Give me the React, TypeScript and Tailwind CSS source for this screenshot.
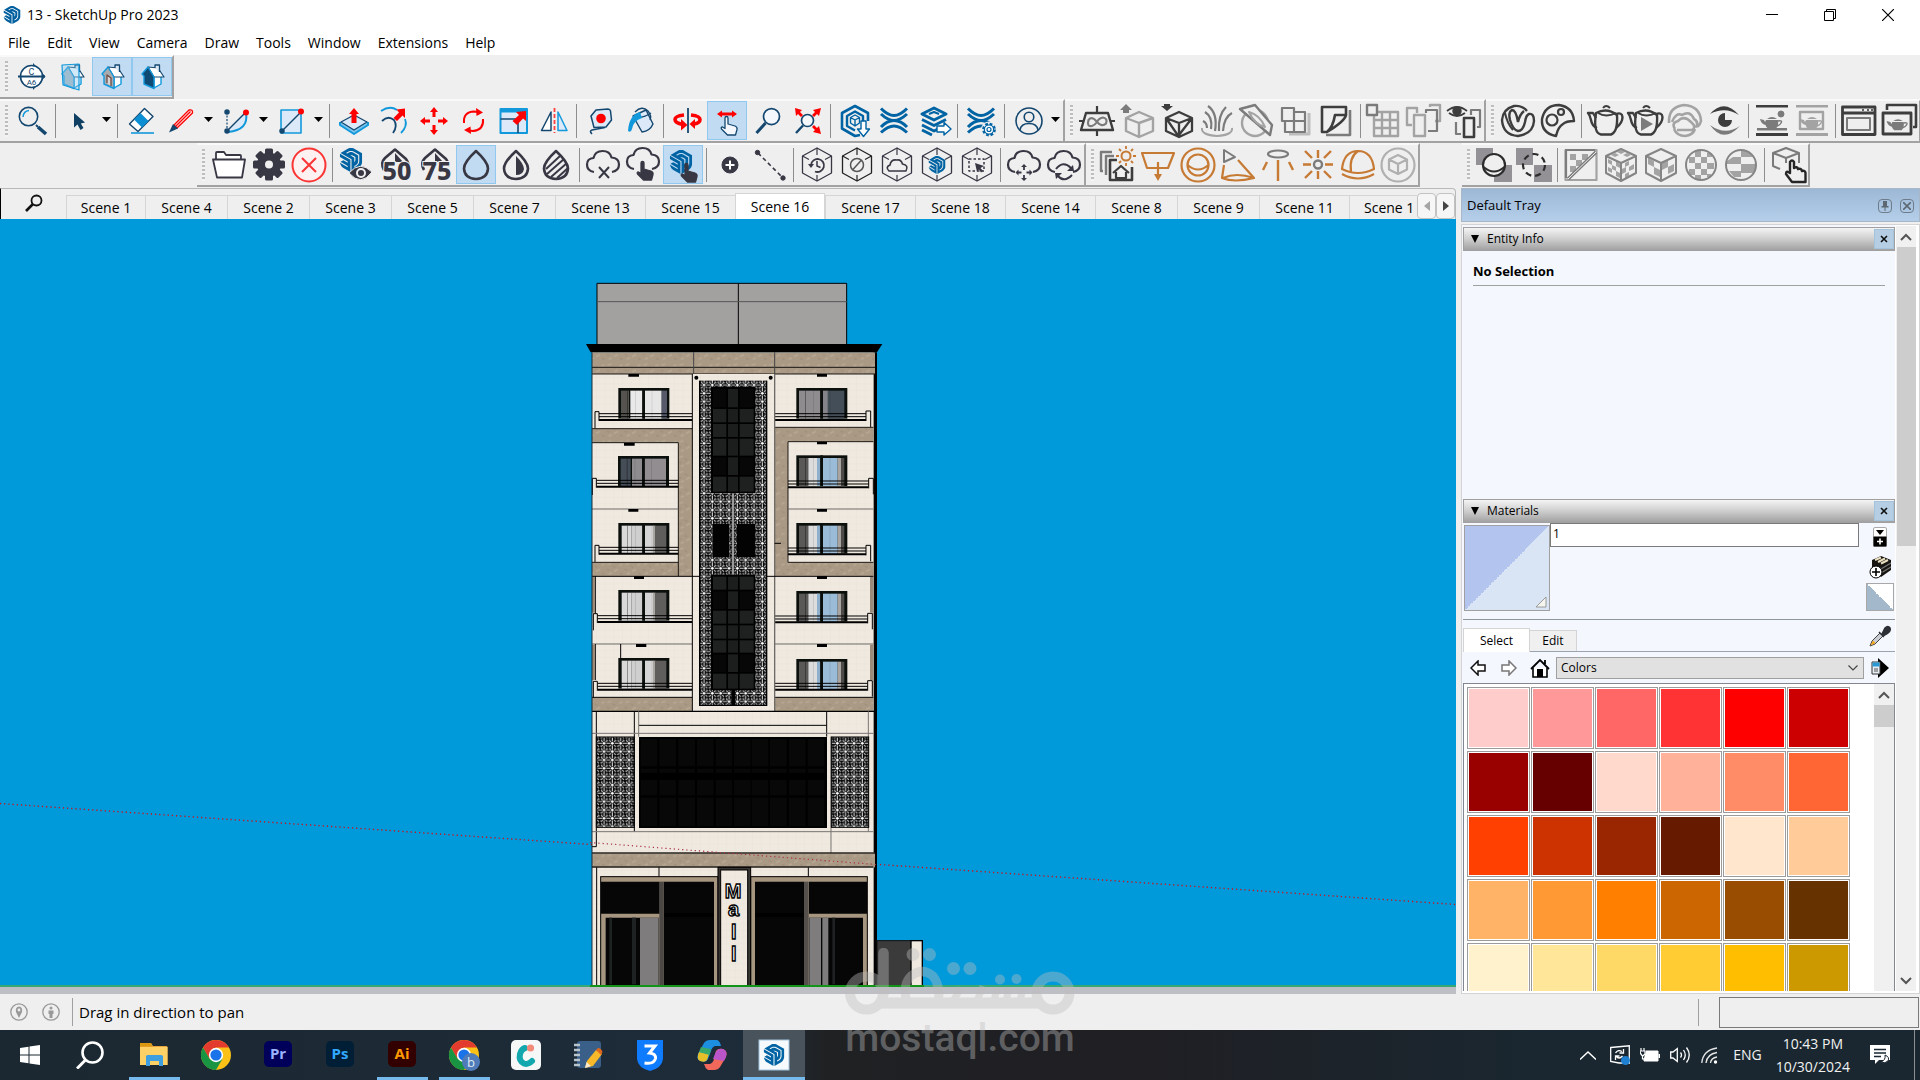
import React, { ReactNode } from "react";
import { SiSketchup } from "react-icons/si";

const NAVY = "#14476f";
const CYAN = "#1299dc";
const RED = "#ff0000";
const BLUE = "#0063a3";
const INK = "#383744";
const DARK = "#3d3d3d";
const MID = "#7b7b7b";
const PALE = "#a3a3a3";
const ORANGE = "#c67a34";

type LineProps = { d: string; c?: string; w?: number; f?: string; dash?: string; o?: number };
const L = ({ d, c = NAVY, w = 1.5, f = "none", dash, o }: LineProps) => (
  <path d={d} stroke={c} strokeWidth={w} fill={f} strokeDasharray={dash} opacity={o} strokeLinejoin="round" />
);
const F = ({ d, c = NAVY, o }: { d: string; c?: string; o?: number }) => <path d={d} fill={c} opacity={o} />;
const O = ({ x, y, r, c = NAVY, w = 1.5, f = "none", dash }: { x: number; y: number; r: number; c?: string; w?: number; f?: string; dash?: string }) => (
  <circle cx={x} cy={y} r={r} stroke={c} strokeWidth={w} fill={f} strokeDasharray={dash} />
);

const House = ({ front }: { front: string }) => (
  <g>
    <F d="M22 20 L29 19 V27 L22 31Z" c="#fff" />
    <L d="M22 19 V31 L29 27 V19" c={CYAN} w={1.4} />
    <L d="M16 10 L26 11 L32 20 L22 20Z" w={1.2} f="#fff" />
    <L d="M23 11 V8 H27.500 V15" w={1.3} f="#dbe8f5" />
    <L d="M12 19 V27 L22 31.500 V20 L16 10 L10 17Z" c={CYAN} w={1.4} f={front} />
  </g>
);

const HexFrame = ({ children, c = INK }: { children?: ReactNode; c?: string }) => (
  <g>
    <L d="M20 3 L34.500 11 V28 L20 36 L5.500 28 V11Z" c={c} w={1.3} />
    <L d="M20 3 V10 M20 30 V36 M5.500 11 L12 14.500 M34.500 11 L28 14.500" c={c} w={1.2} />
    {children}
  </g>
);

const Hand = ({ c, f }: { c: string; f: string }) => (
  <L
    d="M18 17 Q18 15.500 19.500 15.500 Q21 15.500 21 17 V23 L28 25 Q30.500 26 30 28.500 L28.500 34 H20.500 L14.500 28 Q13.500 26 15.500 26 L18 27.500Z"
    c={c}
    f={f}
    w={1.3}
  />
);

const Cloud = ({ d = 0 }: { d?: number }) => (
  <g transform={d ? `translate(0 ${d})` : undefined}>
    <L d="M11 27 Q4 26 4 19.500 Q4 13.500 10.500 13 Q12 6 19.500 6 Q27 6 28.500 12.500 Q36 13 36 19.500 Q36 25.500 29 27" c={INK} w={2.2} />
  </g>
);

const Drop = ({ children }: { children?: ReactNode }) => (
  <g>
    <L d="M20 6 Q32 17 32 23.500 Q31.500 33.500 20 34 Q8.500 33.500 8 23.500 Q8 17 20 6Z" c={INK} w={2.6} />
    {children}
  </g>
);

const Percent = ({ n }: { n: string }) => (
  <g>
    <L d="M8 25 Q4 18 9 13 L19 4.500 L30 14 Q33 18 32 21" c={INK} w={2.6} />
    <F d="M19 8 L27 17 H19Z" c={INK} />
    <text x="21" y="35" textAnchor="middle" fontSize="25" fontWeight="800" fontFamily="Noto Sans" fill={INK} stroke="#efefef" strokeWidth="2" paintOrder="stroke">
      {n}
    </text>
  </g>
);

const Teapot = ({ c = DARK, w = 2.4 }: { c?: string; w?: number }) => (
  <g>
    <L d="M11 12 Q8 32 16 33.500 H26 Q33 31 32 14 Q22 6 11 12Z" c={c} w={w} />
    <L d="M11 17 L8 12 H3 Q5 14 6 19 Q7 25 12 27" c={c} w={w} />
    <L d="M31 13 Q37 11 37.500 16 Q37.500 22 31 27" c={c} w={w} />
    <L d="M13 12 Q21 17 31 12 M18 7 Q21 3 25 7" c={c} w={w * 0.8} />
  </g>
);

const MiniTeapot = ({ c = MID }: { c?: string }) => (
  <g>
    <F d="M14 19 H26 Q27 24 24 27.500 H16 Q14 26 13.500 24 Q9 23 8 18 L12 19 L13 21Z" c={c} />
    <L d="M26 20 Q31 19 29 22 Q28 24 25 25" c={c} w={1.4} />
    <F d="M15 18 Q20 14 25 18Z" c={c} />
  </g>
);

const Waves = () => (
  <g fill="none" stroke={BLUE} strokeWidth={3}>
    <path d="M7 7.500 Q14 14.500 20 14.500 Q26 14.500 33 7.500" />
    <path d="M7 13 Q14 19.500 20 19.500 Q26 19.500 33 13" />
    <path d="M7 26 Q13 19.500 20 19.500 Q27 19.500 33 26" />
    <path d="M7 31.500 Q14 25 20 25 Q26 25 33 31.500" />
  </g>
);

const CubeChecks = ({ fine = false }: { fine?: boolean }) => (
  <g>
    <F
      d={
        fine
          ? "M7 14 L11 16 V20 L7 18Z M11 20 L15 22 V26 L11 24Z M15 16 L19 19 V23 L15 21Z M7 22 L11 24 V28 L7 26Z M15 26 L19 28 V33 L15 31Z M24 18 L28 16 V20 L24 22Z M28 22 L33 19 V24 L28 26Z M21 24 L25 22 V27 L21 29Z M24 29 L28 27 V31 L24 33Z M16 7 L20 5 L24 7 L20 9Z M10 10 L14 8 L18 10 L14 12Z M22 10 L26 8 L30 10 L26 12Z"
          : "M7 13 L13 16 V22 L7 19Z M13 22 L19 25 V32 L13 29Z M21 18 L27 15 V22 L21 25Z M27 22 L33 19 V26 L27 29Z"
      }
      c={PALE}
    />
    <L d="M20 4 L35 11 V28 L20 36 L5 28 V11Z M5 11 L20 18 L35 11 M20 18 V36" c="#858585" w={2} />
  </g>
);

const icons: Record<string, ReactNode> = {
  section: (
    <g>
      <F d="M21 6 L33.500 19.500 L21 33Z" />
      <O x={19.5} y={19.5} r={11} f="#fff" w={1.6} />
      <L d="M6 19.500 H33" w={2} />
      <text x="19.500" y="17.500" fontSize="9" textAnchor="middle" fontFamily="Roboto" fill={NAVY}>C</text>
      <text x="19.500" y="28" fontSize="8" textAnchor="middle" fontFamily="Roboto" fill={NAVY}>A6</text>
    </g>
  ),
  sectionDisplay: (
    <g>
      <House front="#a9b4bc" />
      <L d="M10 8 L27 7 V33 L11 28Z" c={CYAN} w={1.2} f="#8ecbee66" />
    </g>
  ),
  sectionCut: (
    <g>
      <House front="#a7abb0" />
      <L d="M15 26 V18 L19 21 V29" c="#6d4b45" w={1.3} f="#d7d7d7" />
    </g>
  ),
  sectionFill: <House front="#0f4a74" />,
  search: (
    <g>
      <O x={16.5} y={15.6} r={9.2} w={1.6} />
      <L d="M11 16 Q11.500 10 17 9.500" c={CYAN} w={1.5} />
      <L d="M24 24 L26 26" w={2} />
      <L d="M26 26 L34 33" w={3.6} />
    </g>
  ),
  select: <F d="M15 12 V26.500 L18.500 23.500 L21.500 29 L24.500 27 L21.800 22.500 L26 21.500Z" c="#0f3f63" />,
  eraser: (
    <g>
      <L d="M8.500 23 L23.500 7.500 L32 15.500 L17 30.500Z" f="#fff" w={1.4} />
      <F d="M13 18.500 L19.500 12 L27.500 20 L21 26.500Z" c="#0b8fd2" />
      <L d="M10 32 H33" c={CYAN} w={1.6} />
    </g>
  ),
  pencil: (
    <g>
      <L d="M13 24 L28 9 Q32 8 31.500 12 L16 27Z" c={RED} w={1.3} f="#fbe9ea" />
      <L d="M14.500 25.500 L29.500 10.500" c={RED} w={1.2} />
      <F d="M8 31.500 L12 23 L17 27.500Z" />
    </g>
  ),
  arc: (
    <g>
      <F d="M11 30 L30 11 Q32 28 11 30Z" c="#dce9f8" />
      <L d="M11 30 L30 11" w={1.4} />
      <L d="M11 11 V30" w={1.2} dash="2 1.500" />
      <L d="M30 12 Q33 29 12 31" c={CYAN} w={2} />
      <O x={11} y={11} r={2} f={NAVY} />
      <O x={11} y={30} r={2} f={NAVY} />
      <O x={30} y={11.5} r={3} c={RED} f={RED} w={0} />
    </g>
  ),
  rect: (
    <g>
      <L d="M10 9 H30 V32 H10Z" c={CYAN} w={1.6} f="#dce9f8" />
      <L d="M11 30 L30 11" w={1.4} />
      <O x={11} y={30} r={2} f={NAVY} />
      <O x={30} y={10.5} r={3} c={RED} f={RED} w={0} />
    </g>
  ),
  pushPull: (
    <g>
      <L d="M7 21 V24 L21 33 L35 24 V21" c={CYAN} w={2} f="#7cc6ee" />
      <L d="M21 14 L34 21 L21 29 L8 21Z" w={1.3} f="#dce9f8" />
      <F d="M21 7 L26 13 H23.500 V22 H18.500 V13 H16Z" c={RED} />
    </g>
  ),
  offset: (
    <g>
      <L d="M8 10 Q17 4 24 9" c={CYAN} w={1.8} />
      <L d="M32 18 Q35 25 28 32" c={CYAN} w={1.8} />
      <L d="M9 20 Q15 14 21 19 Q25 25 20 32" w={1.8} />
      <F d="M32 7.500 V17 L29.500 14.500 L24 20 L20.500 17 L26 11.500 L23.500 8.500Z" c={RED} />
    </g>
  ),
  move: (
    <F
      d="M21 6 L25 11 H22.500 V16 H19.500 V11 H17Z M21 34 L25 29 H22.500 V24 H19.500 V29 H17Z M7 20 L12 16 V18.500 H17 V21.500 H12 V24Z M35 20 L30 16 V18.500 H25 V21.500 H30 V24Z"
      c={RED}
    />
  ),
  rotate: (
    <g>
      <L d="M11 22 Q10 11 21 10.500 L25 11" c={RED} w={2} />
      <L d="M30 18 Q31 29 20 30 L16 29.500" c={RED} w={2} />
      <F d="M23 7 L30 11.500 L23.500 15Z" c={RED} />
      <F d="M18 33 L11 29 L17.500 25.500Z" c={RED} />
    </g>
  ),
  scale: (
    <g>
      <L d="M7.500 8 H34 V32 H7.500Z" c={CYAN} w={2} f="#dce9f8" />
      <F d="M7 8 H35 V11.500 H7Z" c={CYAN} />
      <L d="M7.500 18 H25 V32" w={1.6} />
      <F d="M33 10 V20 L30 17.500 L24 24 L19.500 20 L26 14 L23 11Z" c={RED} />
    </g>
  ),
  flip: (
    <g>
      <L d="M18 11 V29.500 H8.500Z" w={1.5} f="#fff" />
      <L d="M25 11 V29.500 H34Z" c={CYAN} w={1.5} f="#dce9f8" />
      <L d="M21.500 7 V32" c="#ff4040" w={1.8} dash="4 2" />
    </g>
  ),
  tape: (
    <g>
      <L d="M16 9 L28 8 Q30 8 30.500 10 L31.500 19 L26 26 L14 26.500 L11 15Z" w={1.5} f="#dce9f8" />
      <L d="M25 26.500 L12 29 Q9 30 12 33" w={1.6} />
      <O x={21} y={17.5} r={4.8} c={RED} f={RED} w={0} />
    </g>
  ),
  paint: (
    <g>
      <L d="M13 15 L26 9 L33 23 Q30 30 22 31Z" w={1.4} f="#dce9f8" />
      <L d="M15 11 Q22 4 28 10 Q32 15 30 19 M13 15 Q20 19 31 12" w={1.3} />
      <F d="M20 11 Q9 14 8 30 Q11 32 12 28 Q13 20 22 17Z" c={CYAN} />
    </g>
  ),
  orbit: (
    <g>
      <path d="M17 14 Q8 15 8 18.500 Q8 22 16 23.500" fill="none" stroke={RED} strokeWidth="3.600" />
      <path d="M24 14 Q33 15 33 18.500 Q33 22 27 23" fill="none" stroke={RED} strokeWidth="3.600" />
      <F d="M14 18 L20.500 24 L14 29.500Z" c={RED} />
      <F d="M28 18 L22.500 23 L28 28Z" c={RED} />
      <L d="M21 7 V32" w={1.8} />
    </g>
  ),
  pan: (
    <g>
      <Hand c={NAVY} f="#f4f8fd" />
      <F d="M10 13 L15 9.500 V11.500 H25 V9.500 L30 13 L25 16.500 V14.500 H15 V16.500Z" c={RED} />
    </g>
  ),
  zoom: (
    <g>
      <O x={24.5} y={15.6} r={8} w={1.7} f="#f4f8fd" />
      <L d="M18.500 22 L9.500 32" w={3} />
    </g>
  ),
  extents: (
    <g>
      <O x={20.5} y={19.5} r={6} w={1.7} f="#f4f8fd" />
      <L d="M16 24.500 L9 32" w={2.4} />
      <F d="M8 7 L15 9 L13 11 L16 14 L14 16 L11 13 L9 15Z M34 7 L32 15 L30 13 L27 16 L25 14 L28 11 L26 9Z M34 33 L26 31 L28 29 L25 26 L27 24 L30 27 L32 25Z" c={RED} />
    </g>
  ),
  warehouse: (
    <g>
      <L d="M26 34 L21 35 L8 27.500 V12 L21 5 L34 12 V20" c={BLUE} w={2.6} />
      <L d="M21 29.500 L13 25 V15 L21 10.500 L29 15 V20" c={BLUE} w={2.4} />
      <L d="M21 14 L25.500 16.500 V22 L21 25 L16.500 22 V16.500Z M16.500 16.500 L21 19 L25.500 16.500 M21 19 V25" c={BLUE} w={1.4} />
      <L d="M27 20 H32 V28 H35.500 L29.500 35.500 L23.500 28 H27Z" c={BLUE} w={1.4} f="#fff" />
    </g>
  ),
  extension: <Waves />,
  layout: (
    <g>
      <L d="M8 13 L20 7 L32 13 L20 19Z" c={BLUE} w={3} />
      <L d="M15 13 L20 11 L25 13" c={BLUE} w={2} />
      <L d="M8 18.500 L20 24.500 L32 18.500 M8 24 L20 30 L26 27 M8 29 L18 34" c={BLUE} w={2.8} />
      <L d="M23 25 H30 V21.500 L37 28 L30 34 V31 H23Z" c={BLUE} w={1.4} f="#fff" />
    </g>
  ),
  extManager: (
    <g>
      <Waves />
      <O x={28} y={28.5} r={7.5} c="#efefef" w={1} f="#efefef" />
      <O x={28} y={28.5} r={5.6} c={BLUE} w={2.6} f="#fff" dash="2.600 1.800" />
      <O x={28} y={28.5} r={4.6} c={BLUE} w={1.2} f="#fff" />
      <O x={28} y={28.5} r={2} c={BLUE} w={1.2} />
    </g>
  ),
  account: (
    <g>
      <O x={21} y={20} r={13} w={1.6} />
      <O x={21} y={16} r={4.8} w={1.6} />
      <L d="M12 29 Q13 22.500 21 22.500 Q29 22.500 30 29" w={1.6} />
    </g>
  ),
  infinitePlane: (
    <g>
      <L d="M9 12 H31 L36 29 H4Z" c={DARK} w={2.4} />
      <path d="M20 21 Q15 14.500 11.500 19 Q9.500 26 15 25 Q18 24 20 21 Q22 17 26 16.500 Q31 17.500 29 22.500 Q25 26.500 20 21Z" fill="none" stroke={MID} strokeWidth="2.200" />
      <L d="M20 5 V12 M20 29 V35 M2 20 H7 M33 20 H38" c={DARK} w={2.2} />
    </g>
  ),
  proxyExport: (
    <g>
      <L d="M22 11 L36 17 V30 L22 36 L9 30 V17Z M9 17 L22 22 L36 17 M22 22 V36" c={PALE} w={2.4} />
      <F d="M9 3 L15 9 H12 V12 H6 V9 H3Z" c={MID} />
    </g>
  ),
  proxyImport: (
    <g>
      <L d="M22 11 L35 17 V30 L22 36 L9 30 V17Z M9 17 L22 22 L35 17 M22 22 V36 M9 17 L22 36 M35 17 L22 34" c={DARK} w={2.3} />
      <F d="M10 10 L4 5 H7 V3 H13 V5 H16Z" c={DARK} />
    </g>
  ),
  fur: (
    <g>
      <L d="M5 27 Q4 34 20 35 Q36 34 35 27" c={PALE} w={2} />
      <L d="M14 28 Q16 16 8 11 M18 30 Q21 12 11 5 M22 30 Q21 14 29 6 M26 30 Q27 16 35 12 M10 27 Q10 22 6 20" c={MID} w={2.2} />
    </g>
  ),
  clipper: (
    <g>
      <O x={18} y={22} r={13} c={PALE} w={2.4} />
      <L d="M3 8 L18 4 L35 24 L33 34Z" c={MID} w={2.4} f="#efefef" />
      <L d="M12 11 Q23 14 28 26 Q18 24 12 11Z" c={PALE} w={2} />
    </g>
  ),
  decal: (
    <g>
      <L d="M32 12 V33 H12" c="#bdbdbd" w={3} />
      <L d="M5 7 H17 V20 H5Z" c={MID} w={2.2} />
      <L d="M17 11 H28 V31 H8 V20 M8 20 H28 M17 20 V31" c={MID} w={2.2} />
    </g>
  ),
  displacement: (
    <g>
      <L d="M33 9 V34 H9" c={MID} w={2.6} />
      <L d="M5 6 H29 V14 Q28 20 10 31 H5Z M29 14 H18 Q16 26 10 31" c={DARK} w={2.6} />
    </g>
  ),
  scatter: (
    <g>
      <L d="M10 11 H34 V35 H10Z M10 19 H34 M10 27 H34 M18 11 V35 M26 11 V35" c={PALE} w={2.4} />
      <L d="M3 4 H13 V14 H3Z" c={MID} w={2.4} f="#efefef" />
    </g>
  ),
  copies: (
    <g>
      <L d="M8 24 H3 V7 H13 V12 M26 6 V4 H36 V20 H31" c={PALE} w={2.4} />
      <L d="M22 12 V9 H33 V30 H24" c={MID} w={2.2} />
      <L d="M10 14 H21 V35 H10Z" c={PALE} w={2.4} />
    </g>
  ),
  hideCopies: (
    <g>
      <L d="M3 10 Q13 2 23 10 M5 12 Q13 18 21 12" c={DARK} w={2} />
      <O x={13} y={10} r={4} c={DARK} f={DARK} />
      <L d="M12 21 V33 H17 M27 14 V9 H36 V26 H33" c={MID} w={2.2} />
      <L d="M20 17 H30 V36 H20Z" c={DARK} w={2.6} />
    </g>
  ),
  vray: (
    <g>
      <path d="M29 10 Q24 4 16 5 Q5 8 4 19 Q5 34 20 35 Q35 33 36 20 Q36 12 31 13 Q28 14 27 21 Q25 30 20 30 Q15 29 12 19 Q10 11 14 9 Q18 9 20 21 Q22 13 26 10" fill="none" stroke={DARK} strokeWidth="2.400" />
      <L d="M7 12 Q9 22 15 29" c={DARK} w={2} />
    </g>
  ),
  palette: (
    <g>
      <L d="M18 35 Q3 32 4 18 Q7 4 21 4 Q35 6 36 20 Q28 20 25 23 Q20 26 18 35Z" c={DARK} w={2.4} />
      <O x={14} y={19} r={5.5} c={DARK} w={2.2} />
      <O x={23} y={11} r={3} c={DARK} w={2.2} />
    </g>
  ),
  render: <Teapot />,
  renderPlay: (
    <g>
      <Teapot />
      <F d="M16 16 L28 23 L16 30Z" c={MID} />
    </g>
  ),
  cosmos: (
    <g>
      <L d="M4 22 Q3 6 19 4 Q35 5 36 20 Q34 27 30 25 M7 21 Q11 11 17 14 Q25 9 29 18 Q33 20 32 25" c={PALE} w={2.6} />
      <L d="M10 28 Q6 22 13 20 Q19 14 26 21 Q32 26 27 29 H12 M9 28 Q12 35 20 35 Q28 34 30 28" c={PALE} w={2.6} />
    </g>
  ),
  vision: (
    <g>
      <path d="M5 13 Q19 -3 34 14 Q20 5 5 13Z" fill={DARK} />
      <path d="M5 24 Q18 43 35 25 Q20 35 5 24Z" fill={MID} />
      <F d="M20 12 A7 7 0 1 0 27 19 H20Z" c={DARK} />
    </g>
  ),
  lightGen: (
    <g>
      <F d="M4 4 H36 V6.500 H4Z M4 32 H36 V35 H4Z" c={DARK} />
      <F d="M5 27 H35 V29.500 H5Z" c={MID} />
      <MiniTeapot />
      <O x={29} y={13} r={3} c={MID} f={MID} w={1} />
    </g>
  ),
  lightGenOff: (
    <g>
      <F d="M4 4 H36 V6.500 H4Z M4 32 H36 V35 H4Z" c={PALE} />
      <L d="M8 11 H31 V28 H8Z" c={PALE} w={2.4} />
      <MiniTeapot c={PALE} />
    </g>
  ),
  frameBuffer: (
    <g>
      <L d="M3.500 6 H36 V33.500 H3.500Z M3.500 12 H36" c={DARK} w={2.8} />
      <L d="M24 8 V10 M29 8 V10 M33 8 V10" c={DARK} w={1.6} />
      <L d="M8 17 H31 V29 H8Z" c={MID} w={2} />
    </g>
  ),
  batch: (
    <g>
      <L d="M8 9 V4 H37 V26 H34" c={DARK} w={2.6} />
      <L d="M4 12 H32 V33 H4Z" c={DARK} w={2.8} />
      <g transform="translate(0 3) scale(.95)"><MiniTeapot /></g>
    </g>
  ),
  folder: (
    <g>
      <L d="M7 14 V8 Q7 7 8 7 H15 L17 10 H31 Q32 10 32 11 V14" c={INK} w={1.8} f="#fff" />
      <L d="M4 14.500 H36 L33 32.500 H8Z" c={INK} w={1.8} f="#fff" />
    </g>
  ),
  gear: (
    <g>
      <g fill={INK}>
        {[0, 45, 90, 135].map((a) => (
          <rect key={a} x="16" y="3.500" width="8" height="32" rx="1.500" transform={`rotate(${a} 20 19.500)`} />
        ))}
        <circle cx="20" cy="19.500" r="12" />
      </g>
      <circle cx="20" cy="19.500" r="4" fill="#efefef" />
    </g>
  ),
  cancel: (
    <g>
      <O x={20} y={20} r={16.5} c="#fb3434" w={2} f="#fdf1f1" />
      <L d="M13 13 L27 27 M27 13 L13 27" c="#fb3434" w={2} />
    </g>
  ),
  suEye: (
    <g>
      <SiSketchup x="3" y="3" size={24} color={BLUE} />
      <path d="M13 28 Q24 15 36 27 Q25 42 13 28Z" fill={INK} stroke="#efefef" />
      <O x={25} y={28} r={4} c="#efefef" w={2} />
    </g>
  ),
  fifty: <Percent n="50" />,
  seventyFive: <Percent n="75" />,
  drop: <Drop />,
  halfDrop: (
    <Drop>
      <F d="M20 11 Q28 19 28 24 Q27 30 20 30Z" c={INK} />
    </Drop>
  ),
  hatchDrop: (
    <Drop>
      <L d="M10 24 L24 11 M11 29 L28 14 M15 32 L31 18 M21 33 L32 23" c={INK} w={2} />
    </Drop>
  ),
  cloudX: (
    <g>
      <Cloud />
      <L d="M16 22 L26 33 M26 22 L16 33" c={INK} w={2} />
    </g>
  ),
  cloudHand: (
    <g>
      <Cloud d={-3} />
      <g transform="translate(0 1)"><Hand c={INK} f={INK} /></g>
    </g>
  ),
  suHand: (
    <g>
      <SiSketchup x="6" y="5" size={24} color={BLUE} />
      <g transform="translate(4 3)"><Hand c={INK} f={INK} /></g>
    </g>
  ),
  plus: (
    <g>
      <O x={20} y={20} r={8} c={INK} f={INK} w={1} />
      <L d="M20 15.500 V24.500 M15.500 20 H24.500" c="#fff" w={2} />
    </g>
  ),
  dashLine: (
    <g>
      <L d="M8 8 L33 33" c={INK} w={1.6} dash="4 3" />
      <O x={7.5} y={7.5} r={2.2} c={INK} f={INK} w={1} />
      <O x={33} y={33} r={2.2} c={INK} f={INK} w={1} />
    </g>
  ),
  hexHistory: (
    <HexFrame>
      <L d="M14 20 A6.500 6.500 0 1 1 18 26.500" c={INK} w={1.8} />
      <F d="M11 19 H17 L14 23Z" c={INK} />
      <L d="M20 16 V21 L23.500 22.500" c={INK} w={1.5} />
    </HexFrame>
  ),
  hexNone: (
    <HexFrame c="#222">
      <O x={20} y={20} r={6.5} c="#555" w={1.5} />
      <L d="M15.500 25 L24.500 15" c="#555" w={1.5} />
    </HexFrame>
  ),
  hexCloud: (
    <HexFrame>
      <L d="M12 26 Q8 22 13 20 Q14 14 20 15 Q24 14 25.500 19 Q32 20 29 26Z" c={INK} w={1.6} />
    </HexFrame>
  ),
  hexSu: (
    <HexFrame>
      <SiSketchup x="11" y="11" size={18} color={BLUE} />
    </HexFrame>
  ),
  hexSelect: (
    <HexFrame>
      <L d="M12 14 H27 V26 H12Z" c={INK} w={1.5} dash="2.500 2" />
      <F d="M18 18 L27 21 L23.500 23 L26 26 L24 27.500 L22 24.500 L20 27Z" c={INK} />
    </HexFrame>
  ),
  cloudMove: (
    <g>
      <Cloud />
      <L d="M20 20 V25 M20 30 V35 M13 27.500 H17.500 M22.500 27.500 H27" c={INK} w={1.8} />
      <F d="M20 19 L23 22 H17Z M20 36 L23 33 H17Z M11.500 27.500 L14.500 24.500 V30.500Z M28.500 27.500 L25.500 24.500 V30.500Z" c={INK} />
    </g>
  ),
  cloudSync: (
    <g>
      <Cloud />
      <L d="M12 24 Q19 15 27 23 M28 30 Q20 38 14 31" c={INK} w={2} />
      <F d="M30 26 H23 L29 20Z M11 28 H18 L12 34Z" c={INK} />
    </g>
  ),
  lightScene: (
    <g>
      <L d="M5 26 H3 V7 H14 M8 30 V11 H16" c={MID} w={2.4} />
      <L d="M19 15 H12 V35 H34 V22" c={DARK} w={2.6} />
      <L d="M15 28 L23 21 L31 28 M18 27 V33 H28 V27" c={DARK} w={2.2} />
      <O x={28} y={11} r={4.5} c={ORANGE} w={2} f="#efefef" />
      <L d="M28 1 V4 M28 18 V21 M18 11 H21 M35 11 H38 M21 4 L23 6 M35 4 L33 6 M21 18 L23 16 M35 18 L33 16" c={ORANGE} w={1.8} />
    </g>
  ),
  planeLight: (
    <g>
      <L d="M4 8 H36 L30 23 H9Z M20 17 V32" c={ORANGE} w={2.2} />
      <F d="M16 29 H24 L20 36Z" c={ORANGE} />
    </g>
  ),
  sphereLight: (
    <g>
      <O x={20} y={20} r={16.5} c={ORANGE} w={2.2} />
      <O x={20} y={20} r={10.5} c={ORANGE} w={2.2} />
      <L d="M9.500 20 Q20 29 30.500 20" c={ORANGE} w={2} />
    </g>
  ),
  spotLight: (
    <g>
      <L d="M6 5 V17 L17 12Z" c={MID} w={2} />
      <L d="M6 20 L4 33 Q16 38 36 33 L20 15 M5 33 Q18 27 36 33" c={ORANGE} w={2.2} />
    </g>
  ),
  iesLight: (
    <g>
      <ellipse cx="20" cy="9" rx="10" ry="3.500" fill="none" stroke={MID} strokeWidth="2.200" />
      <L d="M20 15 V36 M9 17 L5 25 M31 17 L35 25" c={ORANGE} w={2.4} />
    </g>
  ),
  omniLight: (
    <g>
      <O x={20} y={19.5} r={4} c={MID} w={2.4} />
      <L d="M20 5 V13 M20 26 V34 M5 19.500 H13 M27 19.500 H35 M7 6 L14 13 M33 6 L26 13 M7 33 L14 26 M33 33 L26 26" c={ORANGE} w={2.4} />
    </g>
  ),
  domeLight: (
    <g>
      <L d="M4 24 Q6 6 20 6 Q34 6 36 24 Q20 32 4 24Z M20 6 Q11 12 13 27" c={ORANGE} w={2.2} />
      <L d="M4 29 Q20 38 36 29" c={ORANGE} w={2.2} />
    </g>
  ),
  meshLight: (
    <g>
      <O x={20} y={20} r={16.5} c="#b0b0b0" w={2.2} />
      <L d="M20 10 L29 14.500 V24.500 L20 29 L11 24.500 V14.500Z M11 14.500 L20 19 L29 14.500 M20 19 V29" c="#b0b0b0" w={2.2} />
    </g>
  ),
  solidAdd: (
    <g>
      <F d="M2 3 H19 V20 H2Z M20 20 H38 V37 H20Z" c="#949196" />
      <O x={20} y={20} r={11} c="#2c2c2c" w={2.2} f="#efefef" />
      <L d="M9.500 22 Q20 31 30.500 22" c="#2c2c2c" w={2} />
    </g>
  ),
  solidDash: (
    <g>
      <F d="M2 3 H19 V20 H2Z M20 20 H38 V37 H20Z" c="#949196" />
      <O x={20} y={20} r={11} c="#2c2c2c" w={2.2} dash="6 4" />
    </g>
  ),
  checkSquare: (
    <g>
      <F d="M9 9 H15 V15 H9Z M15 15 H21 V21 H15Z M21 9 H27 V15 H21Z M9 21 H15 V27 H9Z" c={PALE} />
      <L d="M4.500 5 H35.500 V35 H4.500Z" c={PALE} w={2.2} />
      <L d="M5 33 V5 H34" c="#7d7d7d" w={2.2} />
      <L d="M7 34 L35 7" c={MID} w={3.4} />
      <L d="M7 34 L35 7" c="#efefef" w={1} />
    </g>
  ),
  checkCubeFine: <CubeChecks fine />,
  checkCube: <CubeChecks />,
  checkCircle: (
    <g>
      <F d="M14 6 H20 V12 H14Z M26 8 H31 V12 H26Z M8 12 H14 V18 H8Z M20 12 H26 V18 H20Z M14 18 H20 V24 H14Z M26 18 H33 V24 H26Z M8 24 H14 V30 H8Z M20 24 H26 V30 H20Z M14 30 H20 V34 H14Z M26 29 H30 V32 H26Z" c={PALE} />
      <O x={20} y={20} r={15} c="#858585" w={2} />
    </g>
  ),
  checkCircleWide: (
    <g>
      <F d="M12 12 H20 V19 H6 V16Z M20 6 H28 L33 12 H20Z M20 19 H34 V24 L32 28 H20Z M8 26 H20 V32 H13Z" c={PALE} />
      <O x={20} y={20} r={15} c="#858585" w={2} />
    </g>
  ),
  cubeHand: (
    <g>
      <L d="M12 24 L5 21 V8 L18 3 L31 8 V18 M5 8 L18 13 L31 8 M18 13 V18" c={MID} w={2} />
      <L d="M22 28 V17 Q24 14 26 17 V23 Q29 21 30 24 Q33 23 34 26 Q37 25 37.500 28 V37 H24 L18 29 Q18 25 22 28Z" c="#262626" w={2.4} f="#efefef" />
    </g>
  ),
};

type Entry = string | { sep: true } | { menu: string };
const SEP: Entry = { sep: true };
const menu = (name: string): Entry => ({ menu: name });

function ToolGroup({ items, active = [], label, className = "" }: { items: Entry[]; active?: string[]; label: string; className?: string }) {
  return (
    <div
      role="toolbar"
      aria-label={label}
      className={`flex h-11 shrink-0 items-start border-t-2 border-r-2 border-b-2 border-t-[#f9f9f9] border-r-[#a2a2a2] border-b-[#a2a2a2] ${className}`}
    >
      <span className="mt-1 mr-1 ml-[5px] h-8 w-[3px] shrink-0 bg-[repeating-linear-gradient(180deg,#bdbdbd_0_2px,#f4f4f4_2px_4px)]" />
      {items.map((it, i) => {
        if (typeof it === "string") {
          const on = active.includes(it);
          return (
            <button
              key={i}
              aria-label={it}
              aria-pressed={on}
              className={`flex h-[39px] w-10 shrink-0 items-center justify-center ${on ? "bg-[#c1dcf2] outline-1 -outline-offset-1 outline-[#90c8f0]" : ""}`}
            >
              <svg viewBox="0 0 40 39" className="h-[39px] w-10 shrink-0">
                {icons[it]}
              </svg>
            </button>
          );
        }
        if ("menu" in it) {
          return (
            <button key={i} aria-label={`${it.menu} options`} className="flex h-9 w-[15px] shrink-0 items-center justify-center">
              <svg viewBox="0 0 9 5" className="h-[5px] w-[9px]"><path d="M0 0H9L4.500 5Z" /></svg>
            </button>
          );
        }
        return (
          <span key={i} className="flex w-[7px] shrink-0 justify-center pt-[3px]">
            <span className="h-[34px] w-px bg-[#8d8d8d]" />
          </span>
        );
      })}
    </div>
  );
}

const menus = ["File", "Edit", "View", "Camera", "Draw", "Tools", "Window", "Extensions", "Help"];
const scenes = ["1", "4", "2", "3", "5", "7", "13", "15", "16", "17", "18", "14", "8", "9", "11", "1"];

const tabWidth = (i: number) => {
  if (i === 0) return "w-[79px]";
  if (i === scenes.length - 1) return "flex-1 pl-[14px] text-left";
  return scenes[i].length > 1 ? "w-[90px]" : "w-[82px]";
};

const swatches = [
  "#ffcccc", "#ff9999", "#ff6666", "#ff3333", "#ff0000", "#cc0000",
  "#990000", "#660000", "#ffd9cc", "#ffb299", "#ff8c66", "#ff6633",
  "#ff4000", "#cc3300", "#992600", "#661a00", "#ffe6cc", "#ffcc99",
  "#ffb366", "#ff9933", "#ff8000", "#cc6600", "#994d00", "#663300",
  "#fff2cc", "#ffe699", "#ffd966", "#ffcc33", "#ffbf00", "#cc9900",
];

const Win = ({ x, y, kind, h = 92 }: { x: number; y: number; kind: "white" | "gray" | "blue" | "dark" | "soft"; h?: number }) => {
  const cols: Record<string, [number, number, string][]> = {
    white: [[8, 24, "#55534f"], [36, 36, "#e9e9e9"], [80, 50, "#e6e6e6"], [130, 16, "#55596a"]],
    gray: [[8, 30, "#454d57"], [42, 30, "#8f8c90"], [80, 64, "#918d91"]],
    dark: [[8, 64, "#8f8c90"], [80, 16, "#85838a"], [94, 50, "#434e58"]],
    blue: [[8, 28, "#5b5957"], [36, 34, "#dcdcdc"], [62, 10, "#8fb0cc"], [80, 44, "#9bbcd8"], [124, 10, "#aaa4a0"], [134, 10, "#4d4b48"]],
    soft: [[10, 30, "#d9d9da"], [40, 32, "#cfcfd0"], [80, 26, "#d5d5d6"], [104, 8, "#a9a6a2"], [110, 34, "#605e5c"]],
  };
  return (
    <g transform={`translate(${x} ${y})`}>
      <rect width="153" height={h} fill="#0b100d" />
      {cols[kind].map(([cx, w, c], i) => (
        <rect key={i} x={cx} y="8" width={w} height={h - 8} fill={c} />
      ))}
      <rect x="26" y="8" width="3" height={h - 8} fill="#000" opacity=".35" />
      <rect x="50" y="8" width="2" height={h - 8} fill="#000" opacity=".15" />
      <rect x="100" y="8" width="2" height={h - 8} fill="#000" opacity=".15" />
      <rect x="72" width="8" height={h} fill="#0b100d" />
    </g>
  );
};

const Rail = ({ x1, x2, y, post }: { x1: number; x2: number; y: number; post: "l" | "r" }) => (
  <g>
    <path d={`M${x1} ${y}H${x2} M${x1} ${y + 9}H${x2}`} stroke="#000" strokeWidth="3" />
    <path d={`M${x1} ${y + 19}H${x2}`} stroke="#000" strokeWidth="6" />
    {post === "l" ? (
      <path d={`M${x1 - 12} ${y + 44}V${y - 6}H${x1}V${y + 22}`} fill="#f0e9e0" stroke="#000" strokeWidth="3" />
    ) : (
      <path d={`M${x2} ${y + 22}V${y - 8}H${x2 + 14}V${y + 40}`} fill="#f0e9e0" stroke="#000" strokeWidth="3" />
    )}
  </g>
);

const TowerGlass = ({ y, rows }: { y: number; rows: number[] }) => {
  let top = y;
  return (
    <g>
      <rect x="423" y={y - 4} width="132" height={rows.reduce((a, b) => a + b, 0) + 6} fill="#000" />
      {rows.map((h, i) => {
        const t = top;
        top += h;
        const dark = h > 56;
        return (
          <g key={i} fill={dark ? "#070707" : "#1f2121"}>
            <rect x="429" y={t + 2} width="40" height={h - 5} />
            <rect x="474" y={t + 2} width="30" height={h - 5} fill="#1c1d1d" />
            <rect x="509" y={t + 2} width="42" height={h - 5} />
          </g>
        );
      })}
    </g>
  );
};

function Model() {
  return (
    <svg viewBox="0 219 1456 768" preserveAspectRatio="xMidYMid slice" className="h-full w-full" role="img" aria-label="Building elevation model">
      <defs>
        <pattern id="lattice" width="25" height="25" patternUnits="userSpaceOnUse" x="390" y="8">
          <rect width="25" height="25" fill="#060606" />
          <path d="M12 0V6M12 19V25M0 12H6M19 12H25M3 3L8 8M22 3L17 8M3 22L8 17M22 22L17 17" stroke="#dedede" strokeWidth="3" />
          <path d="M5 0V4M20 0V4M0 20H4M21 5H25M8 12H10M15 12H17M12 8V10M12 15V18" stroke="#a4a4a4" strokeWidth="2.400" />
          <circle cx="12" cy="12" r="4" fill="#fff" />
        </pattern>
        <pattern id="tile" width="26" height="20" patternUnits="userSpaceOnUse">
          <rect width="26" height="20" fill="#f0e9e0" />
          <path d="M0 0H26M0 0V20" stroke="#e9e0d6" strokeWidth="2" />
        </pattern>
        <pattern id="stone" width="54" height="46" patternUnits="userSpaceOnUse">
          <rect width="54" height="46" fill="#aa9a85" />
          <path d="M4 10L16 6M24 30L36 24M40 12L50 8M8 38L18 34" stroke="#b5a792" strokeWidth="5" />
          <path d="M20 14L28 18M2 24L10 26M42 36L50 38" stroke="#9f8f7b" strokeWidth="4" />
        </pattern>
      </defs>
      <path d="M0 803.500L1456 904.500" stroke="#d00f14" strokeWidth="1.400" strokeDasharray="1.200 3" />
      <g transform="translate(570 270) scale(.33333)">
        <rect x="81" y="40" width="749" height="182" fill="#a3a1a0" />
        <path d="M81 222V40H830V222M505 40V222" fill="none" stroke="#000" strokeWidth="3" />
        <path d="M81 95H830" stroke="#555" strokeWidth="3" />
        <rect x="908" y="247" width="13" height="1904" fill="#000" />
        <rect x="66" y="247" width="845" height="1904" fill="url(#tile)" />
        <rect x="66" y="247" width="849" height="65" fill="url(#stone)" />
        <path d="M66 292H915M66 312H915" stroke="#1a1714" strokeWidth="3" />
        <path d="M371 247V312M614 247V312" stroke="#444" strokeWidth="3" />
        <path d="M48 222H937L921 247H62Z" />

        <path d="M66 476H367V918H66V877H325V518H66Z" fill="url(#stone)" />
        <path d="M614 472H910V515H654V877H910V918H614Z" fill="url(#stone)" />
        <path d="M66 476H367M66 518H325V918M66 877H325M614 472H910M910 515H654V877H910" fill="none" stroke="#1c1814" strokeWidth="3" />
        <rect x="66" y="1282" width="301" height="41" fill="url(#stone)" />
        <rect x="614" y="1282" width="296" height="41" fill="url(#stone)" />
        <path d="M66 1282H367M614 1282H910" stroke="#000" strokeWidth="3" />
        <path d="M66 717H325M654 717H910M66 1122H367M614 1122H910" stroke="#6d6a67" strokeWidth="3" />

        <Win x={145} y={354} kind="white" />
        <Win x={679} y={354} kind="dark" />
        <Win x={144} y={558} kind="gray" />
        <Win x={679} y={556} kind="blue" />
        <Win x={145} y={759} kind="soft" />
        <Win x={679} y={759} kind="blue" />
        <Win x={145} y={960} kind="soft" />
        <Win x={679} y={963} kind="blue" />
        <Win x={145} y={1164} kind="soft" />
        <Win x={679} y={1167} kind="blue" />
        <Rail x1={87} x2={367} y={431} post="l" />
        <Rail x1={614} x2={888} y={431} post="r" />
        <Rail x1={79} x2={325} y={631} post="l" />
        <Rail x1={654} x2={896} y={633} post="r" />
        <Rail x1={87} x2={325} y={832} post="l" />
        <Rail x1={654} x2={888} y={834} post="r" />
        <Rail x1={82} x2={367} y={1037} post="l" />
        <Rail x1={614} x2={893} y={1038} post="r" />
        <Rail x1={82} x2={367} y={1240} post="l" />
        <Rail x1={614} x2={893} y={1240} post="r" />
        <path d="M175 312H207V320H175ZM741 312H771V320H741ZM162 519H194V527H162ZM741 515H771V523H741ZM175 717H205V725H175ZM741 717H771V725H741ZM192 918H222V927H192ZM741 918H771V927H741ZM198 1122H229V1131H198ZM741 1122H771V1131H741Z" />
        <path d="M76 918V1030M76 1122V1230M152 1122V1164" stroke="#000" strokeWidth="3" />
        <rect x="66" y="920" width="9" height="108" fill="#9c8b78" />
        <rect x="66" y="1124" width="9" height="106" fill="#9c8b78" />
        <rect x="900" y="920" width="9" height="108" fill="#9c8b78" />
        <rect x="900" y="1124" width="9" height="106" fill="#9c8b78" />

        <rect x="367" y="312" width="247" height="1011" fill="url(#tile)" />
        <path d="M367 312V1323" stroke="#000" strokeWidth="3" />
        <path d="M614 312V1323" stroke="#6d6a67" strokeWidth="4" />
        <circle cx="379" cy="323" r="6" />
        <circle cx="602" cy="323" r="6" />
        <rect x="388" y="332" width="203" height="976" fill="url(#lattice)" />
        <path d="M389 332V1308M590 332V1308M388 1306H591" stroke="#000" strokeWidth="4" />
        <TowerGlass y={355} rows={[60, 45, 44, 56, 58, 50]} />
        <rect x="485" y="668" width="8" height="250" fill="#000" />
        <path d="M489 670V918" stroke="#b9b9b9" strokeWidth="5" />
        <path d="M427 762H478V862H427ZM500 762H555V862H500Z" fill="#030303" />
        <TowerGlass y={918} rows={[44, 58, 44, 45, 42, 58, 50]} />
        <rect x="484" y="1258" width="12" height="48" fill="#000" />
        <path d="M66 919H388M590 919H910M614 820H633" stroke="#000" strokeWidth="3" />

        <path d="M66 1324H912" stroke="#000" strokeWidth="4" />
        <path d="M79 1324V1730H66M193 1324V1685M770 1324V1400M207 1366H770" fill="none" stroke="#000" strokeWidth="3" />
        <path d="M206 1324V1400M895 1324V1685M66 1390H910M66 1685H910M783 1400V1750" stroke="#777471" strokeWidth="3" />
        <rect x="79" y="1401" width="114" height="271" fill="url(#lattice)" stroke="#000" strokeWidth="3" />
        <rect x="784" y="1401" width="112" height="271" fill="url(#lattice)" stroke="#000" strokeWidth="3" />
        <rect x="207" y="1401" width="564" height="273" fill="#000" />
        <g fill="#080808">
          {[212, 268, 325, 381, 437, 492, 545, 600, 657, 713].map((x) => (
            <path key={x} d={`M${x} 1407h50v82h-50z M${x} 1496h50v12h-50z M${x} 1530h50v46h-50z M${x} 1583h50v85h-50z`} />
          ))}
        </g>
        <rect x="66" y="1750" width="849" height="42" fill="url(#stone)" />
        <path d="M66 1749H915M66 1791H910" stroke="#292521" strokeWidth="4" />
        <path d="M66 247V2151" stroke="#1c2b34" strokeWidth="3" />

        <path d="M80 1792V2150M267 1792V1820M715 1792V1820" stroke="#000" strokeWidth="3" />
        <rect x="92" y="1820" width="352" height="330" fill="#a6957f" stroke="#000" strokeWidth="3" />
        <rect x="542" y="1820" width="350" height="330" fill="#a6957f" stroke="#000" strokeWidth="3" />
        <path d="M93 1835H432V2150H281V1835H269V1931H93ZM107 1943H267V2150H107Z" fill="#060606" />
        <path d="M555 1835H702V2150H555ZM717 1835H891V1931H717ZM717 1943H879V2150H717Z" fill="#060606" />
        <rect x="268" y="1835" width="13" height="315" fill="#4b4744" />
        <rect x="702" y="1835" width="14" height="315" fill="#55504c" />
        <rect x="210" y="1943" width="56" height="205" fill="#7e7c7d" />
        <rect x="186" y="1943" width="12" height="200" fill="#1f2222" />
        <rect x="118" y="1943" width="8" height="200" fill="#1f2222" />
        <rect x="718" y="1943" width="35" height="205" fill="#7e7c7d" />
        <rect x="757" y="1943" width="18" height="205" fill="#7e7c7d" />
        <rect x="787" y="1943" width="8" height="200" fill="#1f2222" />
        <path d="M284 1935H430M557 1935H700" stroke="#000" strokeWidth="12" />
        <rect x="444" y="1792" width="98" height="358" fill="#393633" stroke="#000" strokeWidth="3" />
        <rect x="452" y="1800" width="81" height="348" fill="url(#tile)" stroke="#000" strokeWidth="3" />
        <g fontFamily="Liberation Sans" fontWeight="700" fontSize="60" fill="#fff" stroke="#000" strokeWidth="4" textAnchor="middle">
          <text x="489" y="1883">M</text>
          <text x="491" y="1938">a</text>
          <text x="491" y="2006">l</text>
          <text x="491" y="2074">l</text>
        </g>
        <rect x="921" y="2012" width="104" height="138" fill="#3b3b3c" stroke="#111" strokeWidth="3" />
        <rect x="1023" y="2012" width="34" height="138" fill="#f0e9e0" stroke="#000" strokeWidth="4" />
      </g>
      <path d="M590 842.500L876 864.500" stroke="#a8304a" strokeWidth="1.200" strokeDasharray="1.200 3" />
      <path d="M0 986H1456" stroke="#4cae52" strokeWidth="1.600" />
      <path d="M590 986H924" stroke="#129418" strokeWidth="2" />
    </svg>
  );
}

function PanelHeader({ title }: { title: string }) {
  return (
    <div className="flex h-6 shrink-0 items-center border border-[#a0a0a0] bg-[linear-gradient(180deg,#f4f4f4,#d2d2d2_45%,#a2a2a2)] pl-[7px]">
      <svg viewBox="0 0 8 8" className="mr-2 h-2 w-2"><path d="M0 0H8L4 8Z" /></svg>
      <h2 className="flex-1 text-xs leading-none">{title}</h2>
      <button aria-label={`Close ${title}`} className="flex h-5 w-5 items-center justify-center border border-[#a5c3dc] bg-[#b5cee3]">
        <svg viewBox="0 0 8 8" className="h-2 w-2"><path d="M1 1L7 7M7 1L1 7" stroke="#111" strokeWidth="1.600" /></svg>
      </button>
    </div>
  );
}

const Chevron = ({ d }: { d: string }) => (
  <svg viewBox="0 0 12 8" className="h-2 w-3"><path d={d} fill="none" stroke="#555" strokeWidth="2" /></svg>
);

function Tray() {
  return (
    <aside className="flex w-[459px] shrink-0 flex-col">
      <header className="flex h-[34px] shrink-0 items-center border border-[#a9b8c8] bg-[linear-gradient(180deg,#9cb8d4,#b5cfeb)] px-[5px] pt-px">
        <h1 className="flex-1 text-[13px]">Default Tray</h1>
        <button aria-label="Pin tray" className="mr-2 flex h-3.5 w-3.5 items-center justify-center rounded-sm border border-[#6f7c8a]">
          <svg viewBox="0 0 8 10" className="h-2.5 w-2"><path d="M2 0H6V5H7.500V6.500H.5V5H2ZM3.500 6.500H4.500V10H3.500Z" fill="#5d6873" /></svg>
        </button>
        <button aria-label="Close tray" className="flex h-3.5 w-3.5 items-center justify-center rounded-sm border border-[#6f7c8a]">
          <svg viewBox="0 0 8 8" className="h-2 w-2"><path d="M0 0L8 8M8 0L0 8" stroke="#5d6873" strokeWidth="1.600" /></svg>
        </button>
      </header>
      <div className="mt-0.5 flex min-h-0 flex-1 border border-[#d4d4d4] bg-white pb-0.5">
        <div className="flex min-w-0 flex-1 flex-col bg-[#f4f7fd] pt-0.5 pl-px">
          <PanelHeader title="Entity Info" />
          <section className="h-[248px] shrink-0 px-2.5 pt-2.5">
            <p className="border-b border-[#a0a0a0] pb-1 text-[13px] leading-5 font-bold">No Selection</p>
          </section>
          <PanelHeader title="Materials" />
          <section className="flex h-[97px] shrink-0 items-start border-b border-[#8f959c]">
            <button aria-label="Material preview" className="mt-0.5 ml-px h-[86px] w-[86px] shrink-0 border border-[#a0a0a0] bg-[linear-gradient(135deg,#b3c5ee_50%,#d9e5f4_50%)]">
              <svg viewBox="0 0 84 84"><path d="M81 71V81H71Z" fill="#f5f5f0" stroke="#9a9a9a" /></svg>
            </button>
            <input aria-label="Material name" defaultValue="1" className="h-6 min-w-0 flex-1 border border-[#7a7a7a] bg-white px-0.5 pb-1 text-xs" />
            <div className="ml-1.5 flex w-[30px] shrink-0 flex-col items-center pt-1">
              <button aria-label="Display secondary pane">
                <svg viewBox="0 0 14 20" className="h-5 w-3.5"><rect x=".5" y=".5" width="13" height="19" rx="1.500" fill="#fff" stroke="#aaa" /><path d="M3 3H11L7 8ZM.5 9.500H13.500V19.500H.5Z" /><path d="M7 11.500V17.500M4 14.500H10" stroke="#fff" strokeWidth="1.600" /></svg>
              </button>
              <button aria-label="Create material" className="mt-2">
                <svg viewBox="0 0 23 24" className="h-6 w-[23px]"><path d="M3 5L12 1L22 5V15L12 22L3 16Z" fill="#181612" /><path d="M6 5L12 2.500M9 7L16 3.500M12 8.500L19 5" stroke="#eadfc0" strokeWidth="2" /><path d="M12 14L22 8M12 18L22 12" stroke="#777" strokeWidth="1.200" /><circle cx="7" cy="17" r="6" fill="#fff" stroke="#000" /><path d="M7 13V21M3 17H11" stroke="#000" strokeWidth="1.600" /></svg>
              </button>
              <button aria-label="Default material" className="mt-1 h-7 w-7 border border-[#a8a8a8] bg-[linear-gradient(45deg,#a3b9cb_50%,#fff_50%)]" />
            </div>
          </section>
          <div className="mt-2 flex h-6 shrink-0 items-end border-b border-[#9aa3b0]" role="tablist">
            <button role="tab" aria-selected="true" className="-mb-px h-6 w-[67px] border border-b-0 border-[#d4d4d4] bg-white text-xs">Select</button>
            <button role="tab" aria-selected="false" className="h-[21px] w-[47px] border border-b-0 border-l-0 border-[#d4d4d4] bg-[#f0f0f0] text-xs">Edit</button>
            <button aria-label="Sample paint" className="mr-1 mb-1 ml-auto">
              <svg viewBox="0 0 22 22" className="h-[22px] w-[22px]"><path d="M1 21L3 16L11 8L14 11L6 19Z" fill="#c9ccd2" stroke="#444" /><path d="M1.500 20.500L4 15.500L6.500 18Z" fill="#f6a81c" /><path d="M10 7L15 12M13 9L16 3Q19 0 21 3Q22 6 19 8L14 11Z" fill="#2d2f36" stroke="#2d2f36" strokeWidth="1.500" /></svg>
            </button>
          </div>
          <div className="flex h-[31px] shrink-0 items-center pr-1.5 pl-[7px]">
            <button aria-label="Back"><svg viewBox="0 0 16 16" className="h-4 w-4"><path d="M1 8L8 1V5H15V11H8V15Z" fill="#fff" stroke="#111" strokeWidth="1.500" /></svg></button>
            <button aria-label="Forward" className="ml-[15px]"><svg viewBox="0 0 16 16" className="h-4 w-4"><path d="M15 8L8 1V5H1V11H8V15Z" fill="#fff" stroke="#777" strokeWidth="1.500" /></svg></button>
            <button aria-label="In model" className="mr-1.5 ml-[13px]"><svg viewBox="0 0 20 20" className="h-5 w-5"><path d="M3 10V19H17V10" fill="#fff" stroke="#000" strokeWidth="1.600" /><path d="M1 11L10 2L19 11M15 6V2" fill="none" stroke="#000" strokeWidth="1.800" /><rect x="7" y="11" width="6" height="8" /></svg></button>
            <div className="relative min-w-0 flex-1">
              <select aria-label="Material collection" className="h-[22px] w-full appearance-none border border-[#a0a0a0] bg-[#e1e1e1] pl-1 text-xs">
                <option>Colors</option>
              </select>
              <svg viewBox="0 0 10 6" className="pointer-events-none absolute top-2 right-1.5 h-1.5 w-2.5"><path d="M.5 .5L5 5L9.500 .5" fill="none" stroke="#444" strokeWidth="1.200" /></svg>
            </div>
            <button aria-label="Details" className="ml-[7px]"><svg viewBox="0 0 18 20" className="h-5 w-[18px]"><path d="M7 0L18 10L7 20V16H1V4H7Z" /><path d="M1 4H9V16H1Z" fill="#e8eef4" stroke="#333" /><rect x="1.500" y="4.500" width="7" height="4" fill="#2a9ad6" /><path d="M3 11H7M3 13H7" stroke="#555" /></svg></button>
          </div>
          <div className="flex min-h-0 flex-1 overflow-hidden border-x border-t border-[#828790] bg-white">
            <div className="grid flex-1 grid-cols-[repeat(6,63px)] content-start gap-x-px gap-y-0.5 pt-[3px] pl-[3px]">
              {swatches.map((c) => (
                <button key={c} aria-label={c} className="h-[62px] border border-[#9b9b9b] p-px">
                  <span className="block h-full w-full" style={{ backgroundColor: c }} />
                </button>
              ))}
            </div>
            <div className="flex w-5 flex-col items-center bg-[#f0f0f0]">
              <button aria-label="Scroll swatches up" className="flex h-[21px] items-center"><Chevron d="M1 7L6 2L11 7" /></button>
              <div className="h-[22px] w-full bg-[#cdcdcd]" />
            </div>
          </div>
        </div>
        <div className="mt-px ml-px flex w-5 flex-col items-center bg-[#f0f0f0]">
          <button aria-label="Scroll tray up" className="flex h-[21px] items-center"><Chevron d="M1 7L6 2L11 7" /></button>
          <div className="h-[299px] w-[19px] bg-[#cdcdcd]" />
          <button aria-label="Scroll tray down" className="mt-auto flex h-[21px] items-center"><Chevron d="M1 1L6 6L11 1" /></button>
        </div>
        <span className="w-[3px]" />
      </div>
    </aside>
  );
}

const Chrome = () => (
  <g>
    <circle cx="16" cy="16" r="15" fill="#fbc116" />
    <path d="M3 8.500A15 15 0 0 1 29 8.500H16L9.500 20Z" fill="#e33b2e" />
    <path d="M3 8.500A15 15 0 0 0 16 31L22.500 19.700L9.500 19.700Z" fill="#199443" />
    <circle cx="16" cy="16" r="7.200" fill="#fff" />
    <circle cx="16" cy="16" r="5.600" fill="#1a73e8" />
  </g>
);

const Adobe = ({ t, bg, fg }: { t: string; bg: string; fg: string }) => (
  <g>
    <rect x="2" y="2" width="28" height="26" rx="5" fill={bg} />
    <text x="16" y="20" fontSize="15" fontWeight="700" fontFamily="Open Sans" fill={fg} textAnchor="middle">{t}</text>
  </g>
);

const taskApps: { name: string; state?: "open" | "active"; icon: ReactNode }[] = [
  {
    name: "File Explorer",
    state: "open",
    icon: (
      <g>
        <path d="M2 4H13L15 7H28Q29.500 7 29.500 8V26H2Z" fill="#e8a33d" />
        <path d="M2 8H29.500V26H2Z" fill="#fdd166" />
        <path d="M2 4H13L14.500 7.500H2Z" fill="#d9980f" />
        <path d="M8 27V17.500Q8 16 9.500 16H23Q25 16 25 17.500V27H21V22H12V27Z" fill="#3d9fe0" />
      </g>
    ),
  },
  { name: "Chrome", icon: <Chrome /> },
  { name: "Premiere Pro", icon: <Adobe t="Pr" bg="#00005b" fg="#9bb4ff" /> },
  { name: "Photoshop", icon: <Adobe t="Ps" bg="#001e36" fg="#31a8ff" /> },
  { name: "Illustrator", state: "open", icon: <Adobe t="Ai" bg="#330000" fg="#ff9a00" /> },
  {
    name: "Chrome profile",
    state: "open",
    icon: (
      <g>
        <Chrome />
        <circle cx="23" cy="23" r="9" fill="#4f7cb8" />
        <text x="23" y="27.500" fontSize="13" textAnchor="middle" fontFamily="Open Sans" fill="#dfe9f5">b</text>
      </g>
    ),
  },
  {
    name: "Camtasia",
    icon: (
      <g>
        <rect x="1" y="1" width="30" height="30" rx="5" fill="#f6f8f8" />
        <path d="M22 22Q18 26 14 24.500Q8.500 22 10 15Q11.500 10 15 9" fill="none" stroke="#13a8ae" strokeWidth="6" strokeLinecap="round" />
        <circle cx="20.500" cy="9" r="3.600" fill="#f38a7a" />
      </g>
    ),
  },
  {
    name: "Notes",
    icon: (
      <g>
        <rect x="5" y="2" width="24" height="27" rx="3" fill="#3a5f88" />
        <path d="M2 6H8M2 11H8M2 16H8M2 21H8M2 26H8" stroke="#b9c3cc" strokeWidth="2.400" />
        <path d="M13 29L15 22L24 11L30 15L21 27Z" fill="#f7b829" />
        <path d="M24 11L26 9Q29 9 30.500 13L29 16Z" fill="#e0681b" />
        <path d="M13 29L14.500 23L19 27Z" fill="#f9e9cf" />
      </g>
    ),
  },
  {
    name: "3",
    icon: (
      <g>
        <path d="M3 1H29V20Q28 29 16 32Q4 29 3 20Z" fill="#0f7bff" />
        <path d="M10.500 7H21L15.500 14Q22 14.500 21.500 19.500Q20 25.500 10.500 24" fill="none" stroke="#fff" strokeWidth="3" />
      </g>
    ),
  },
  {
    name: "Copilot",
    icon: (
      <g>
        <path d="M8 4Q10 1 14 1H21Q24 2 25 7H19Q16 8 15 12L12 20Q10 24 5 22Q0 21 2 15Z" fill="#1c8fe0" />
        <path d="M3 13L13 15L11 21Q9 24 4 22Q0 20 3 13Z" fill="#e6c02a" />
        <path d="M5 8L15 10L13.500 16L3 13Z" fill="#38a86b" />
        <path d="M24 28Q22 31 18 31H12Q9 29 8 25H14Q17 24 18 20L20 12Q22 9 27 10Q32 12 30 18Z" fill="#f2695c" />
        <path d="M19 15Q21 9 27 10Q32 12 30 18L28 22L17 20Z" fill="#b955c9" />
      </g>
    ),
  },
  {
    name: "SketchUp",
    state: "active",
    icon: (
      <g>
        <rect x="1" y="1" width="30" height="30" fill="#f7fafc" stroke="#9fc3e0" />
        <SiSketchup x="5" y="5" size={22} color={BLUE} />
      </g>
    ),
  },
];

function Taskbar() {
  return (
    <footer className="flex h-[50px] shrink-0 items-stretch bg-[linear-gradient(90deg,#1b2831,#1e2c3a_40%,#202123_43%,#1f1f24_60%,#1a2730_80%)] text-[#f1f1f1]">
      <button aria-label="Start" className="flex w-[60px] items-center justify-center">
        <svg viewBox="0 0 20 20" className="h-5 w-5"><path d="M0 3L8.500 1.800V9.500H0ZM9.500 1.600L20 0V9.500H9.500ZM0 10.500H8.500V18.200L0 17ZM9.500 10.500H20V20L9.500 18.500Z" fill="#fff" /></svg>
      </button>
      <button aria-label="Search" className="flex w-[63px] items-center justify-center pr-1">
        <svg viewBox="0 0 28 28" className="h-7 w-7"><circle cx="16.500" cy="11.500" r="10" fill="none" stroke="#fff" strokeWidth="2.600" /><path d="M9.500 19L1 27.500" stroke="#fff" strokeWidth="3" /></svg>
      </button>
      {taskApps.map((a) => (
        <button
          key={a.name}
          aria-label={a.name}
          className={`flex w-[62px] flex-col items-center justify-between ${a.state === "active" ? "bg-[#49535b]" : ""}`}
        >
          <svg viewBox="0 0 32 32" className="mt-[9px] h-8 w-8">{a.icon}</svg>
          {a.state === "open" && <span className="h-[3px] w-[51px] bg-[#76b9ed]" />}
          {a.state === "active" && <span className="h-[3px] w-full bg-[#76b9ed]" />}
        </button>
      ))}
      <div className="ml-auto flex items-center text-sm">
        <button aria-label="Show hidden icons" className="mr-3.5"><svg viewBox="0 0 16 9" className="h-[9px] w-4"><path d="M0 8.500L8 1L16 8.500" fill="none" stroke="#fff" strokeWidth="1.400" /></svg></button>
        <button aria-label="Sync" className="mr-2.5"><svg viewBox="0 0 20 20" className="h-5 w-5"><path d="M.7 2.500L19.300 .8V18H9L.7 16.500Z" fill="none" stroke="#fff" strokeWidth="1.300" /><path d="M5.500 8Q8 4 12 6.500M13.500 4V8H9.500M5.500 15V11H9.500M6 11Q9 15 12.500 11" fill="none" stroke="#fff" strokeWidth="1.300" /><circle cx="15.500" cy="15.500" r="4.500" fill="#1f7fd0" /></svg></button>
        <button aria-label="Battery" className="mr-2.5"><svg viewBox="0 0 20 14" className="h-3.5 w-5"><path d="M6 3H18V13H4V10" fill="#fff" stroke="#fff" /><rect x="18.500" y="6" width="1.500" height="4" fill="#fff" /><path d="M1 0V3M4 0V3M0 3H5V6Q3 8 2.500 8Q0 6 0 3M2.500 8V11H4" fill="none" stroke="#fff" strokeWidth="1.200" /></svg></button>
        <button aria-label="Volume" className="mr-2.5"><svg viewBox="0 0 21 18" className="h-[18px] w-[21px]"><path d="M.7 6H3L7.300 2.500V15.500L3 12H.7Z" fill="none" stroke="#fff" strokeWidth="1.300" /><path d="M10.500 6.500Q12.500 9 10.500 11.500M13.500 4Q17 9 13.500 14M16.500 1.500Q22 9 16.500 16.500" fill="none" stroke="#fff" strokeWidth="1.300" /></svg></button>
        <button aria-label="Network" className="mr-3.5"><svg viewBox="0 0 18 17" className="h-[17px] w-[18px]"><path d="M.8 16Q2 3 16 1M5 16Q6 7 16 5.500M9.500 16Q10 11 16 10" fill="none" stroke="#e6e6e6" strokeWidth="1.300" /><circle cx="14.500" cy="15" r="1.700" fill="#fff" /></svg></button>
        <button className="mr-3.5">ENG</button>
        <button className="flex flex-col items-center text-sm leading-[23px]">
          <time>10:43 PM</time>
          <time>10/30/2024</time>
        </button>
        <button aria-label="Notifications" className="ml-5"><svg viewBox="0 0 21 21" className="h-[21px] w-[21px]"><path d="M0 0H20V15H9L5 19V15H0Z" fill="#fff" /><path d="M4 4.500H16M4 8H16M4 11.500H11" stroke="#1a2730" strokeWidth="1.300" /><path d="M15 10Q20 12 18 16Q15 19 11 17Q16 15 15 10Z" fill="#fff" stroke="#1a2730" /></svg></button>
        <span className="mr-[5px] ml-[23px] h-[50px] w-px bg-[#8b9094]" />
      </div>
    </footer>
  );
}

const Watermark = () => (
  <div aria-hidden="true" className="pointer-events-none absolute bottom-5 left-1/2 flex -translate-x-1/2 flex-col items-center opacity-40">
    <svg viewBox="0 0 230 68" className="h-[68px] w-[230px]">
      <g fill="none" stroke="#bebebe">
        <circle cx="21.500" cy="45" r="16.500" strokeWidth="10" />
        <circle cx="208" cy="45" r="16.500" strokeWidth="10" />
        <path d="M36 55H196" strokeWidth="11" />
        <path d="M38.500 5V46" strokeWidth="10.500" strokeLinecap="round" />
        <path d="M62 55Q57 36 66 28Q77 19 88 28Q96 38 93 55" strokeWidth="9" />
        <path d="M116 40L108 53M138 38L132 53M152 40L149 53M164 40L161 53M178 40L175 53" strokeWidth="7" />
      </g>
      <g fill="#bebebe">
        <circle cx="68" cy="6.500" r="6.500" />
        <circle cx="84.500" cy="6.500" r="6.500" />
        <circle cx="108.500" cy="20.500" r="6.500" />
        <circle cx="125" cy="20.500" r="6.500" />
        <circle cx="155" cy="31.500" r="5" />
        <circle cx="171.500" cy="31" r="5" />
      </g>
    </svg>
    <span className="font-['Roboto'] text-[39px] leading-[44px] font-medium text-[#bebebe]">mostaql.com</span>
  </div>
);

export default function App() {
  return (
    <div className="relative flex h-screen flex-col overflow-hidden bg-[#efefef] font-['Open_Sans','Noto_Sans',sans-serif] text-sm text-black">
      <div className="flex h-[29px] shrink-0 items-center bg-white pl-[3px]">
        <SiSketchup size={18} color="#005f9e" />
        <span className="ml-1.5 flex-1">13 - SketchUp Pro 2023</span>
        <button aria-label="Minimize" className="flex h-full w-[58px] items-center justify-center"><svg viewBox="0 0 12 12" className="h-3 w-3"><path d="M0 5.500H12" stroke="#000" /></svg></button>
        <button aria-label="Restore" className="flex h-full w-[58px] items-center justify-center"><svg viewBox="0 0 12 12" className="h-3 w-3"><path d="M.5 2.500H9.500V11.500H.5ZM2.500 2.500V.5H11.500V9.500H9.500" fill="none" stroke="#000" /></svg></button>
        <button aria-label="Close" className="mr-[3px] flex h-full w-[58px] items-center justify-center"><svg viewBox="0 0 12 12" className="h-3 w-3"><path d="M0 0L12 12M12 0L0 12" stroke="#000" strokeWidth="1.200" /></svg></button>
      </div>
      <nav className="flex h-[26px] shrink-0 items-center gap-px bg-white pt-px">
        {menus.map((m) => (
          <button key={m} className="h-full px-2">{m}</button>
        ))}
      </nav>
      <div className="flex h-11 shrink-0">
        <ToolGroup label="Section" items={["section", "sectionDisplay", "sectionCut", "sectionFill"]} active={["sectionCut", "sectionFill"]} />
      </div>
      <div className="flex h-11 shrink-0 overflow-hidden">
        <ToolGroup
          label="Getting started"
          items={["search", SEP, "select", menu("Select"), SEP, "eraser", "pencil", menu("Line"), "arc", menu("Arc"), "rect", menu("Shape"), SEP, "pushPull", "offset", "move", "rotate", "scale", "flip", SEP, "tape", "paint", SEP, "orbit", "pan", "zoom", "extents", SEP, "warehouse", "extension", "layout", SEP, "extManager", SEP, "account", menu("Account")]}
          active={["pan"]}
        />
        <ToolGroup label="V-Ray objects" items={["infinitePlane", "proxyExport", "proxyImport", "fur", "clipper", "decal", "displacement", SEP, "scatter", "copies", "hideCopies"]} />
        <ToolGroup label="V-Ray" items={["vray", "palette", SEP, "render", "renderPlay", "cosmos", "vision", SEP, "lightGen", "lightGenOff", SEP, "frameBuffer", "batch"]} />
      </div>
      <div className="flex h-11 shrink-0 overflow-hidden pl-[197px]">
        <ToolGroup
          label="Styles and scans"
          items={["folder", "gear", "cancel", SEP, "suEye", "fifty", "seventyFive", "drop", "halfDrop", "hatchDrop", SEP, "cloudX", "cloudHand", "suHand", SEP, "plus", "dashLine", SEP, "hexHistory", "hexNone", "hexCloud", "hexSu", "hexSelect", SEP, "cloudMove", "cloudSync"]}
          active={["drop", "suHand"]}
        />
        <ToolGroup label="V-Ray lights" items={["lightScene", "planeLight", "sphereLight", "spotLight", "iesLight", "omniLight", "domeLight", "meshLight"]} />
        <ToolGroup label="V-Ray utilities" className="ml-[42px]" items={["solidAdd", "solidDash", SEP, "checkSquare", "checkCubeFine", "checkCube", "checkCircle", "checkCircleWide", SEP, "cubeHand"]} />
      </div>

      <div className="mt-px flex min-h-0 flex-1">
        <main className="mr-[5px] flex min-w-0 flex-1 flex-col">
          <div className="flex h-[31px] shrink-0 items-end rounded-tr border-t border-r border-l border-t-[#b9b9b9] border-r-[#b9b9b9] border-l-black">
            <button aria-label="Search scenes" className="flex h-full w-[65px] shrink-0 items-center justify-center pb-0.5">
              <svg viewBox="0 0 18 18" className="h-[18px] w-[18px]"><circle cx="11.500" cy="6.500" r="5" fill="none" stroke="#111" strokeWidth="1.800" /><path d="M8 10L1 17" stroke="#111" strokeWidth="2.600" /></svg>
            </button>
            <div role="tablist" className="flex min-w-0 flex-1 items-end">
              {scenes.map((s, i) => {
                const on = s === "16";
                return (
                  <button
                    key={i}
                    role="tab"
                    aria-selected={on}
                    className={`shrink-0 border-[#d5d5d5] whitespace-nowrap ${tabWidth(i)} ${on ? "h-[26px] border-x border-t bg-white" : "h-6 border-t border-l"}`}
                  >
                    Scene {s}
                  </button>
                );
              })}
            </div>
            <button aria-label="Previous scenes" className="flex h-[26px] w-[19px] shrink-0 items-center justify-center rounded-sm border border-[#c2c2c2] bg-[#f6f6f6]"><svg viewBox="0 0 6 10" className="h-2.5 w-1.5"><path d="M6 0V10L0 5Z" fill="#a5a5a5" /></svg></button>
            <button aria-label="Next scenes" className="flex h-[26px] w-[19px] shrink-0 items-center justify-center rounded-sm border border-[#c2c2c2] bg-[#f6f6f6]"><svg viewBox="0 0 6 10" className="h-2.5 w-1.5"><path d="M0 0V10L6 5Z" fill="#444" /></svg></button>
          </div>
          <div className="min-h-0 flex-1 bg-[#009adb]">
            <Model />
          </div>
          <div className="h-[7px] shrink-0 bg-[#bebfc5]" />
        </main>
        <Tray />
      </div>

      <div className="flex h-9 shrink-0 items-center pl-2.5">
        <button aria-label="Geo-location"><svg viewBox="0 0 18 18" className="h-[18px] w-[18px]"><circle cx="9" cy="9" r="8.200" fill="none" stroke="#999" strokeWidth="1.300" /><path d="M9 15L6 9Q5 4 9 3.500Q13 4 12 9Z" fill="#999" /><circle cx="9" cy="7" r="1.400" fill="#efefef" /></svg></button>
        <button aria-label="Credits" className="ml-3.5"><svg viewBox="0 0 18 18" className="h-[18px] w-[18px]"><circle cx="9" cy="9" r="8.200" fill="none" stroke="#999" strokeWidth="1.300" /><circle cx="9" cy="5" r="1.500" fill="#999" /><path d="M6.500 7.500H11.500V11H10.500V15H7.500V11H6.500Z" fill="#999" /></svg></button>
        <span className="mr-[6px] ml-3 h-7 w-px bg-[#a0a0a0]" />
        <span className="flex-1 pt-0.5 text-[15px]">Drag in direction to pan</span>
        <span className="mr-5 h-[27px] w-px bg-[#a0a0a0]" />
        <input aria-label="Measurements" className="mr-px h-[31px] w-[200px] border border-[#7a7a7a] bg-[#efefef] px-1" />
      </div>
      <Taskbar />
      <Watermark />
    </div>
  );
}
